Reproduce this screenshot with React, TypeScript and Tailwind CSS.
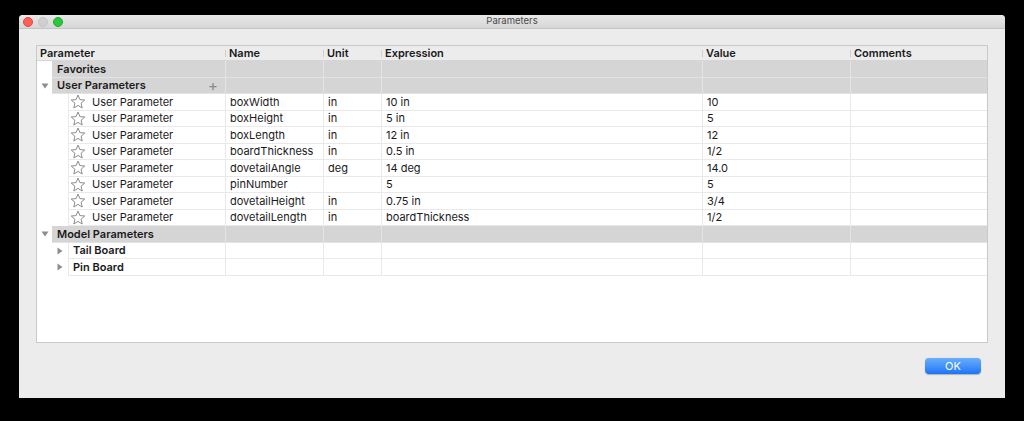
const font = "font-['Inter','Liberation_Sans',sans-serif]";

type Param = { name: string; unit: string; expr: string; value: string };

const params: Param[] = [
  { name: "boxWidth", unit: "in", expr: "10 in", value: "10" },
  { name: "boxHeight", unit: "in", expr: "5 in", value: "5" },
  { name: "boxLength", unit: "in", expr: "12 in", value: "12" },
  { name: "boardThickness", unit: "in", expr: "0.5 in", value: "1/2" },
  { name: "dovetailAngle", unit: "deg", expr: "14 deg", value: "14.0" },
  { name: "pinNumber", unit: "", expr: "5", value: "5" },
  { name: "dovetailHeight", unit: "in", expr: "0.75 in", value: "3/4" },
  { name: "dovetailLength", unit: "in", expr: "boardThickness", value: "1/2" },
];

const Star = () => (
  <svg width="16" height="15" viewBox="0 0 16 15" className="shrink-0">
    <polygon
      points="8,1 9.9,5.6 14.8,6 11.1,9.2 12.2,14 8,11.4 3.8,14 4.9,9.2 1.2,6 6.1,5.6"
      fill="none"
      stroke="#8c8c8c"
      strokeWidth="1"
      strokeLinejoin="round"
    />
  </svg>
);

const Down = () => (
  <svg width="8" height="6" viewBox="0 0 8 6">
    <polygon points="0.5,0.5 7.5,0.5 4,5.5" fill="#8e8e8e" />
  </svg>
);

const Right = () => (
  <svg width="6" height="8" viewBox="0 0 6 8">
    <polygon points="0.5,0.5 5.5,4 0.5,7.5" fill="#8e8e8e" />
  </svg>
);

// widths of columns after the first: Name, Unit, Expression, Value, Comments
const RestCells = ({ cells, gray }: { cells: string[]; gray?: boolean }) => (
  <>
    <div className={`w-[98px] h-full border-l px-[4px] flex items-center ${gray ? "border-[#e4e4e4]" : "border-[#e9e9e9]"}`}>{cells[0]}</div>
    <div className={`w-[58px] h-full border-l px-[4px] flex items-center ${gray ? "border-[#e4e4e4]" : "border-[#e9e9e9]"}`}>{cells[1]}</div>
    <div className={`w-[321px] h-full border-l px-[4px] flex items-center ${gray ? "border-[#e4e4e4]" : "border-[#e9e9e9]"}`}>{cells[2]}</div>
    <div className={`w-[148px] h-full border-l px-[4px] flex items-center ${gray ? "border-[#e4e4e4]" : "border-[#e9e9e9]"}`}>{cells[3]}</div>
    <div className={`flex-1 h-full border-l px-[4px] flex items-center ${gray ? "border-[#e4e4e4]" : "border-[#e9e9e9]"}`}>{cells[4]}</div>
  </>
);

const GroupRow = ({ label, open, plus }: { label: string; open?: boolean; plus?: boolean }) => (
  <div className="flex h-[16.5px]">
    <div className="w-[15px] flex items-center justify-center pl-[1px]">{open && <Down />}</div>
    <div className="flex-1 flex bg-[#d5d5d5] border-b border-[#e2e2e2] font-semibold">
      <div className="w-[173px] h-full flex items-center justify-between pl-[5px] pr-[7px]">
        <span>{label}</span>
        {plus && <span className="text-[#8a8a8a] font-normal text-[15px] leading-none">+</span>}
      </div>
      <RestCells cells={["", "", "", "", ""]} gray />
    </div>
  </div>
);

const ParamRow = ({ p }: { p: Param }) => (
  <div className="flex h-[16.5px]">
    <div className="w-[31px]" />
    <div className="flex-1 flex border-b border-[#e9e9e9]">
      <div className="w-[157px] h-full border-l border-[#e9e9e9] flex items-center gap-[6px] pl-[1px]">
        <Star />
        <span>User Parameter</span>
      </div>
      <RestCells cells={[p.name, p.unit, p.expr, p.value, ""]} />
    </div>
  </div>
);

const ChildGroupRow = ({ label }: { label: string }) => (
  <div className="flex h-[16.5px]">
    <div className="w-[31px] flex items-center justify-end pr-[5px]">
      <Right />
    </div>
    <div className="flex-1 flex border-b border-[#e9e9e9]">
      <div className="w-[157px] h-full border-l border-[#e9e9e9] flex items-center pl-[4px] font-semibold">{label}</div>
      <RestCells cells={["", "", "", "", ""]} />
    </div>
  </div>
);

const HeaderCell = ({ label, w, first }: { label: string; w: string; first?: boolean }) => (
  <div className={`${w} h-full flex items-center relative ${first ? "pl-[3px]" : "pl-[4px]"}`}>
    {!first && <div className="absolute left-0 top-[4px] bottom-[3px] w-px bg-[#cfcfcf]" />}
    {label}
  </div>
);

export default function App() {
  return (
    <div className={`w-[1024px] h-[421px] bg-black pt-[15px] pl-[19px] ${font} text-[11px] text-[#1a1a1a]`}>
      <div className="w-[986px] h-[383px] bg-[#ececec] flex flex-col rounded-t-[4px] overflow-hidden">
        {/* title bar */}
        <div className="h-[14px] shrink-0 bg-gradient-to-b from-[#e9e9e9] to-[#d6d6d6] border-b border-[#c4c4c4] flex items-center relative">
          <div className="flex items-center gap-[5px] pl-[4px]">
            <div className="w-[10px] h-[10px] rounded-full bg-[#fd5f57] border border-[#e2463f]" />
            <div className="w-[10px] h-[10px] rounded-full bg-[#d0d0d0] border border-[#c2c2c2]" />
            <div className="w-[10px] h-[10px] rounded-full bg-[#28c840] border border-[#1aab29]" />
          </div>
          <div className="flex-1 text-center text-[9.5px] text-[#4a4a4a] pr-[44px]">Parameters</div>
        </div>

        {/* body */}
        <div className="flex-1 flex flex-col px-[17px] pt-[16px] pb-[23px]">
          <div className="h-[298px] bg-white border border-[#c9c9c9] flex flex-col">
            <div className="h-[15px] shrink-0 flex bg-[#ececec] border-b border-[#d6d6d6] font-semibold">
              <HeaderCell label="Parameter" w="w-[188px]" first />
              <HeaderCell label="Name" w="w-[98px]" />
              <HeaderCell label="Unit" w="w-[58px]" />
              <HeaderCell label="Expression" w="w-[321px]" />
              <HeaderCell label="Value" w="w-[148px]" />
              <HeaderCell label="Comments" w="flex-1" />
            </div>
            <GroupRow label="Favorites" />
            <GroupRow label="User Parameters" open plus />
            {params.map((p) => (
              <ParamRow key={p.name} p={p} />
            ))}
            <GroupRow label="Model Parameters" open />
            <ChildGroupRow label="Tail Board" />
            <ChildGroupRow label="Pin Board" />
          </div>
          <div className="flex justify-end mt-[15px] pr-[7px]">
            <button
              type="button"
              className="w-[56px] h-[16px] rounded-[4px] bg-gradient-to-b from-[#69aefc] to-[#1b74f6] text-white text-[11px] leading-none shadow-[0_0.5px_1px_rgba(0,0,0,0.25)]"
            >
              OK
            </button>
          </div>
        </div>
      </div>
    </div>
  );
}
